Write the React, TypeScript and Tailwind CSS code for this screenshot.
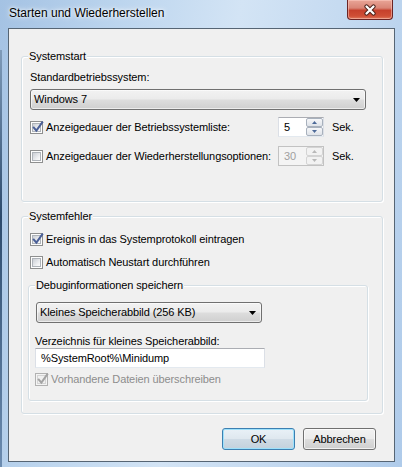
import React from "react";

function CheckBox({ checked = false, disabled = false }: { checked?: boolean; disabled?: boolean }) {
  return (
    <span
      className={`relative flex h-[13px] w-[13px] shrink-0 items-center justify-center border ${
        disabled ? "border-[#b1b1b1] bg-[#f4f4f4]" : "border-[#8e8f8f] bg-[#fdfdfd]"
      }`}
    >
      <span
        className={`h-[9px] w-[9px] border ${
          disabled
            ? "border-[#d4d4d4] bg-[#f0f0f0]"
            : "border-[#aeb3b9] bg-[linear-gradient(135deg,#cbcfd5,#f0f1f3_70%,#fbfbfc)]"
        }`}
      />
      {checked && (
        <svg className="absolute left-[1px] top-[-1px]" width="12" height="12" viewBox="0 0 12 12">
          <path
            d="M1.8 6.6 L4.4 9.6 L10.2 1.4"
            fill="none"
            stroke={disabled ? "#a3a3a3" : "#4a5f97"}
            strokeWidth="2"
            strokeLinecap="square"
          />
        </svg>
      )}
    </span>
  );
}

function Combo({ text, width }: { text: string; width: string }) {
  return (
    <div
      className={`flex h-[21px] ${width} items-center justify-between rounded-[3px] border border-[#707070] bg-[linear-gradient(to_bottom,#f2f2f2_0%,#ebebeb_48%,#dddddd_52%,#cfcfcf_100%)] pl-[3px] pr-[5px] shadow-[inset_0_0_0_1px_rgba(255,255,255,0.6)]`}
    >
      <span className="leading-[15px] text-black">{text}</span>
      <svg width="7" height="4" viewBox="0 0 7 4">
        <polygon points="0,0 7,0 3.5,4" fill="#000" />
      </svg>
    </div>
  );
}

function SpinArrow({ up, disabled }: { up: boolean; disabled: boolean }) {
  return (
    <svg width="5" height="3" viewBox="0 0 5 3">
      <polygon points={up ? "0,3 5,3 2.5,0" : "0,0 5,0 2.5,3"} fill={disabled ? "#b8b8b8" : "#4d6a99"} />
    </svg>
  );
}

function Spin({ value, disabled = false }: { value: string; disabled?: boolean }) {
  const btn = disabled
    ? "border-[#d4d4d4] bg-[#f2f2f2]"
    : "border-[#a8b1bd] bg-[linear-gradient(to_bottom,#f6f7f9,#dfe3e9)]";
  return (
    <div
      className={`flex h-[20px] w-[46px] shrink-0 border ${
        disabled
          ? "border-[#c2c2c2] bg-[#f4f4f4]"
          : "border-t-[#abadb3] border-x-[#dbdfe6] border-b-[#e3e9ef] bg-white"
      }`}
    >
      <span className={`flex-1 pl-[5px] leading-[18px] ${disabled ? "text-[#a0a0a0]" : "text-black"}`}>{value}</span>
      <div className="flex w-[17px] flex-col">
        <div className={`flex h-[9px] items-center justify-center rounded-[2px] border ${btn}`}>
          <SpinArrow up disabled={disabled} />
        </div>
        <div className={`flex h-[9px] items-center justify-center rounded-[2px] border ${btn}`}>
          <SpinArrow up={false} disabled={disabled} />
        </div>
      </div>
    </div>
  );
}

function Group({
  label,
  className,
  children,
}: {
  label: string;
  className: string;
  children: React.ReactNode;
}) {
  return (
    <div
      className={`relative flex flex-col rounded-[3px] border border-[#d5dfe5] shadow-[inset_1px_1px_0_#fff,1px_1px_0_#fff] ${className}`}
    >
      <span className="absolute left-[6px] top-[-8px] bg-[#f0f0f0] px-[1px] leading-[15px] text-black">{label}</span>
      {children}
    </div>
  );
}

function Button({ label, isDefault = false }: { label: string; isDefault?: boolean }) {
  return (
    <div
      className={`flex h-[22px] w-[73px] items-center justify-center rounded-[3px] border ${
        isDefault
          ? "border-[#3c7fb1] bg-[linear-gradient(to_bottom,#e9f1f7_0%,#dfe8ef_48%,#cfdbe5_52%,#c3d1dc_100%)] shadow-[inset_0_0_0_1px_#9ee1fb]"
          : "border-[#707070] bg-[linear-gradient(to_bottom,#f2f2f2_0%,#ebebeb_48%,#dddddd_52%,#cfcfcf_100%)] shadow-[inset_0_0_0_1px_rgba(255,255,255,0.7)]"
      }`}
    >
      <span className="leading-[15px] text-black">{label}</span>
    </div>
  );
}

function CloseButton() {
  return (
    <div className="flex h-[20px] w-[46px] items-center justify-center rounded-b-[4px] border border-t-0 border-[#6b2424] bg-[linear-gradient(to_bottom,#e9a597_0%,#d98576_42%,#c6402c_55%,#cf4f36_85%,#e07a5f_100%)] shadow-[inset_0_0_0_1px_rgba(255,210,200,0.5)]">
      <svg width="14" height="12" viewBox="0 0 14 12">
        <path d="M3.5 2.5 L10.5 9.5 M10.5 2.5 L3.5 9.5" stroke="#4a2019" strokeWidth="4.2" strokeLinecap="round" />
        <path d="M3.5 2.5 L10.5 9.5 M10.5 2.5 L3.5 9.5" stroke="#ffffff" strokeWidth="2.3" strokeLinecap="round" />
      </svg>
    </div>
  );
}

export default function App() {
  return (
    <div className="relative flex h-[467px] w-[402px] flex-col overflow-hidden bg-[linear-gradient(100deg,#a4c2e3_0%,#bcd5ee_25%,#d3e4f5_50%,#c6dbf1_70%,#afcbea_100%)] font-['Liberation_Sans',Arial,sans-serif] text-[11px] tracking-[-0.1px]">
      <div className="absolute bottom-0 left-0 top-[50px] w-[2px] bg-[linear-gradient(to_bottom,#7f9bb9,#2c4a6c_40%,#6c8cb0)]" />
      <div className="flex h-[28px] shrink-0 items-start justify-between pl-[9px] pr-[9px]">
        <span className="mt-[5px] text-[12px] leading-[16px] tracking-normal text-black [text-shadow:0_0_6px_#fff,0_0_3px_#fff]">
          Starten und Wiederherstellen
        </span>
        <CloseButton />
      </div>

      <div className="ml-[8px] flex h-[434px] w-[387px] flex-col border border-[#566574] bg-[#f0f0f0] pl-[12px]">
        <Group label="Systemstart" className="mt-[27px] h-[146px] w-[362px]">
          <span className="ml-[8px] mt-[13px] leading-[15px] text-black">Standardbetriebssystem:</span>
          <div className="ml-[8px] mt-[4px]">
            <Combo text="Windows 7" width="w-[336px]" />
          </div>
          <div className="ml-[8px] mt-[7px] flex h-[20px] items-center">
            <div className="flex w-[248px] items-center gap-[3px]">
              <CheckBox checked />
              <span className="whitespace-nowrap leading-[15px] text-black">Anzeigedauer der Betriebssystemliste:</span>
            </div>
            <Spin value="5" />
            <span className="ml-[8px] leading-[15px] text-black">Sek.</span>
          </div>
          <div className="ml-[8px] mt-[9px] flex h-[20px] items-center">
            <div className="flex w-[248px] items-center gap-[3px]">
              <CheckBox />
              <span className="whitespace-nowrap leading-[15px] text-black">
                Anzeigedauer der Wiederherstellungsoptionen:
              </span>
            </div>
            <Spin value="30" disabled />
            <span className="ml-[8px] leading-[15px] text-black">Sek.</span>
          </div>
        </Group>

        <Group label="Systemfehler" className="mt-[14px] h-[198px] w-[362px]">
          <div className="ml-[8px] mt-[15px] flex h-[15px] items-center gap-[3px]">
            <CheckBox checked />
            <span className="leading-[15px] text-black">Ereignis in das Systemprotokoll eintragen</span>
          </div>
          <div className="ml-[8px] mt-[8px] flex h-[15px] items-center gap-[3px]">
            <CheckBox />
            <span className="leading-[15px] text-black">Automatisch Neustart durchführen</span>
          </div>

          <Group label="Debuginformationen speichern" className="ml-[6px] mt-[15px] h-[116px] w-[340px]">
            <div className="ml-[7px] mt-[16px]">
              <Combo text="Kleines Speicherabbild (256 KB)" width="w-[226px]" />
            </div>
            <span className="ml-[6px] mt-[11px] leading-[14px] text-black">
              Verzeichnis für kleines Speicherabbild:
            </span>
            <div className="ml-[6px] flex h-[20px] w-[230px] items-center border border-t-[#abadb3] border-x-[#dbdfe6] border-b-[#e3e9ef] bg-white pl-[5px]">
              <span className="leading-[15px] text-black">%SystemRoot%\Minidump</span>
            </div>
            <div className="ml-[6px] mt-[4px] flex h-[15px] items-center gap-[3px]">
              <CheckBox checked disabled />
              <span className="leading-[15px] text-[#8d8d8d]">Vorhandene Dateien überschreiben</span>
            </div>
          </Group>
        </Group>

        <div className="mt-[14px] flex justify-end gap-[8px] pr-[18px]">
          <Button label="OK" isDefault />
          <Button label="Abbrechen" />
        </div>
      </div>
    </div>
  );
}
